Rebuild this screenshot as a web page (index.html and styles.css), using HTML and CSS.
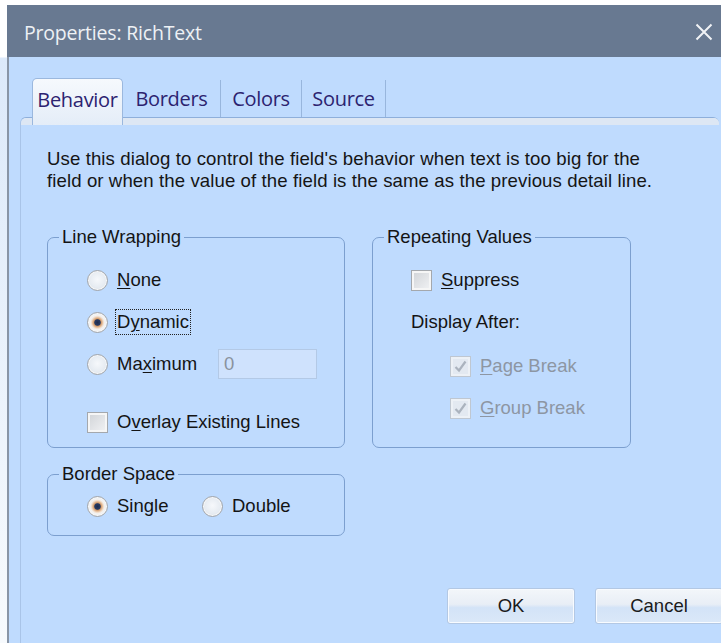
FILE: index.html
```html
<!DOCTYPE html>
<html lang="en">
<head>
<meta charset="utf-8">
<title>Properties: RichText</title>
<link rel="stylesheet" href="styles.css">
</head>
<body>
<div class="window">
  <div class="titlebar">
    <span class="title">Properties: RichText</span>
    <svg class="close" width="18" height="18" viewBox="0 0 18 18">
      <path d="M1.5 1.5 L16.5 16.5 M16.5 1.5 L1.5 16.5" stroke="#f1f3f6" stroke-width="2" fill="none"/>
    </svg>
  </div>
  <div class="client">
    <div class="tabs">
      <div class="tab tab-behavior active">Behavior</div>
      <div class="tab tab-borders">Borders</div>
      <div class="tab tab-colors">Colors</div>
      <div class="tab tab-source">Source</div>
    </div>
    <div class="panel">
      <div class="panel-band"></div>
      <p class="intro">Use this dialog to control the field's behavior when text is too big for the<br>field or when the value of the field is the same as the previous detail line.</p>

      <div class="groups">
        <fieldset class="group group-wrap">
          <legend>Line Wrapping</legend>
          <div class="rows">
            <div class="row"><span class="radio"></span><span class="label"><u>N</u>one</span></div>
            <div class="row"><span class="radio checked"></span><span class="label focus">D<u>y</u>namic</span></div>
            <div class="row"><span class="radio"></span><span class="label label-max">Ma<u>x</u>imum</span><span class="numbox">0</span></div>
            <div class="row row-overlay"><span class="check"></span><span class="label">O<u>v</u>erlay Existing Lines</span></div>
          </div>
        </fieldset>

        <fieldset class="group group-repeat">
          <legend>Repeating Values</legend>
          <div class="rows">
            <div class="row"><span class="check"></span><span class="label"><u>S</u>uppress</span></div>
            <div class="row"><span class="label plain">Display After:</span></div>
            <div class="row row-sub row-page"><span class="check disabled">
              <svg width="15" height="15" viewBox="0 0 15 15"><path d="M2.5 8 L6 11.5 L12.5 2.5" stroke="#abb3be" stroke-width="2.2" fill="none"/></svg>
            </span><span class="label dim"><u>P</u>age Break</span></div>
            <div class="row row-sub"><span class="check disabled">
              <svg width="15" height="15" viewBox="0 0 15 15"><path d="M2.5 8 L6 11.5 L12.5 2.5" stroke="#abb3be" stroke-width="2.2" fill="none"/></svg>
            </span><span class="label dim"><u>G</u>roup Break</span></div>
          </div>
        </fieldset>
      </div>

      <fieldset class="group group-space">
        <legend>Border Space</legend>
        <div class="rows">
          <div class="row row-inline">
            <span class="radio checked"></span><span class="label label-single">Single</span>
            <span class="radio"></span><span class="label">Double</span>
          </div>
        </div>
      </fieldset>

      <div class="buttons">
        <div class="btn">OK</div>
        <div class="btn">Cancel</div>
      </div>
    </div>
  </div>
</div>
</body>
</html>
```

FILE: styles.css
```css
html, body {
  margin: 0;
  padding: 0;
}

body {
  width: 721px;
  height: 643px;
  overflow: hidden;
  background: linear-gradient(#ffffff 0, #ffffff 57px, #dce9fa 58px, #f7fafd 100%);
  font-family: "Liberation Sans", Arial, sans-serif;
  color: #141414;
}

.window {
  margin: 5px 0 0 7px;
  width: 714px;
  height: 638px;
  display: flex;
  flex-direction: column;
}

/* caption bar */
.titlebar {
  height: 52px;
  flex: none;
  background: #687991;
  display: flex;
  align-items: center;
  justify-content: space-between;
  padding: 0 8px 0 17px;
}

.title {
  font-family: "Open Sans", "Noto Sans", sans-serif;
  font-size: 19.5px;
  color: #eef1f5;
  letter-spacing: -0.2px;
  margin-top: 2px;
}

.close {
  display: block;
  margin-top: 1px;
}

.client {
  flex: 1;
  min-height: 0;
  background: #bfdbfe;
  border-left: 2px solid #8995a6;
  padding-top: 21px;
  display: flex;
  flex-direction: column;
}

/* tab strip */
.tabs {
  display: flex;
  height: 39px;
  margin-left: 23px;
  position: relative;
  z-index: 1;
  flex: none;
}

.tab {
  display: flex;
  align-items: center;
  justify-content: center;
  font-family: "Open Sans", "Noto Sans", sans-serif;
  font-size: 20px;
  letter-spacing: -0.3px;
  color: #2c2370;
  border-right: 1px solid #98b6dd;
  box-sizing: border-box;
  height: 37px;
  margin-top: 2px;
}

.tab-behavior { width: 91px; }
.tab-borders { width: 98px; }
.tab-colors { width: 81px; }
.tab-source { width: 84px; }

.tab.active {
  background: linear-gradient(#f6f9fd, #e4edf8);
  border: 1px solid #9bb8de;
  border-bottom: none;
  border-radius: 5px 5px 0 0;
  height: 47px;
  margin-top: 0;
  padding-bottom: 6px;
}

.panel {
  flex: 1;
  margin-left: 11px;
  margin-right: 2px;
  border-top: 1px solid #8eafdb;
  border-left: 1px solid #a9c4e8;
  border-radius: 6px 6px 0 0;
  display: flex;
  flex-direction: column;
  padding-left: 26px;
}

.panel-band {
  height: 7px;
  flex: none;
  margin-left: -26px;
  background: #dde7f4;
  border-radius: 5px 5px 0 0;
}

.intro {
  margin: 23px 0 0 0;
  font-size: 18.6px;
  line-height: 22px;
  letter-spacing: 0.1px;
  color: #151515;
  white-space: nowrap;
}

/* group boxes */
.groups {
  display: flex;
  gap: 27px;
  margin-top: 34px;
}

.group {
  margin: 0;
  border: 1px solid #7c9fcf;
  border-radius: 7px;
  box-sizing: border-box;
  padding: 0;
  min-width: 0;
}

.group legend {
  font-size: 18.5px;
  padding: 0 3px;
  margin-left: 11px;
  line-height: 22px;
  color: #141414;
}

.group-wrap {
  width: 298px;
  height: 222px;
}

.group-repeat {
  width: 259px;
  height: 222px;
}

.group-space {
  width: 298px;
  height: 73px;
  margin-top: 15px;
}

.rows {
  padding: 11px 0 0 39px;
}

.group-repeat .rows {
  padding-left: 38px;
}

.group-space .rows {
  padding-top: 9px;
}

.row {
  height: 42px;
  display: flex;
  align-items: center;
}

.row-overlay {
  margin-top: 16px;
}

.row-sub {
  padding-left: 39px;
}

.row-page {
  margin-top: 2px;
}

.row-inline {
  height: 24px;
}

.label {
  font-size: 18.5px;
  margin-left: 9px;
  color: #141414;
}

.label.plain {
  margin-left: 0;
}

.label u {
  text-underline-offset: 2px;
}

.label.dim {
  color: #8d96a3;
}

.label-max {
  width: 101px;
}

.label-single {
  width: 85px;
}

.label.focus {
  outline: 1px dotted #222;
  outline-offset: 1px;
}

/* radio buttons */
.radio {
  width: 21px;
  height: 21px;
  flex: none;
  box-sizing: border-box;
  border-radius: 50%;
  border: 1px solid #a3a6aa;
  background: radial-gradient(circle at 50% 45%, #f6f8fb 0, #e7ecf2 55%, #d5dce4 100%);
  box-shadow: inset 0 0 0 1px #f7f7f7;
}

.radio.checked {
  background: radial-gradient(circle at 50% 50%, #1d2b4c 0, #263a63 2.8px, #d49c6c 3.8px, #f2dfcd 6px, #f3f3f3 7.2px, #e2e6ea 100%);
}

/* checkboxes */
.check {
  width: 21px;
  height: 21px;
  flex: none;
  box-sizing: border-box;
  border: 1px solid #a4a8ad;
  background: linear-gradient(135deg, #d0d3d7, #f2f3f5);
  box-shadow: inset 0 0 0 2px #f6f6f6;
  display: flex;
  align-items: center;
  justify-content: center;
}

.check.disabled {
  border-color: #bfc7d1;
  background: #e3e9f1;
  box-shadow: inset 0 0 0 2px #edf1f6;
}

.check svg {
  display: block;
}

.numbox {
  width: 99px;
  height: 30px;
  box-sizing: border-box;
  background: #cfe2fd;
  border: 1px solid #b3c9e6;
  font-size: 18.5px;
  color: #8a929e;
  padding-left: 5px;
  display: flex;
  align-items: center;
}

/* command buttons */
.buttons {
  display: flex;
  justify-content: flex-end;
  gap: 20px;
  margin-top: 52px;
  margin-right: -4px;
}

.btn {
  width: 128px;
  height: 36px;
  box-sizing: border-box;
  border: 1px solid #b3c8e4;
  border-radius: 3px;
  background: linear-gradient(#f3f6fa 0%, #e8eef6 45%, #d3e3f7 55%, #dbe8f8 100%);
  box-shadow: inset 0 0 0 1px #f8fbff;
  display: flex;
  align-items: center;
  justify-content: center;
  font-size: 18.5px;
  color: #1b1b1b;
}
```
